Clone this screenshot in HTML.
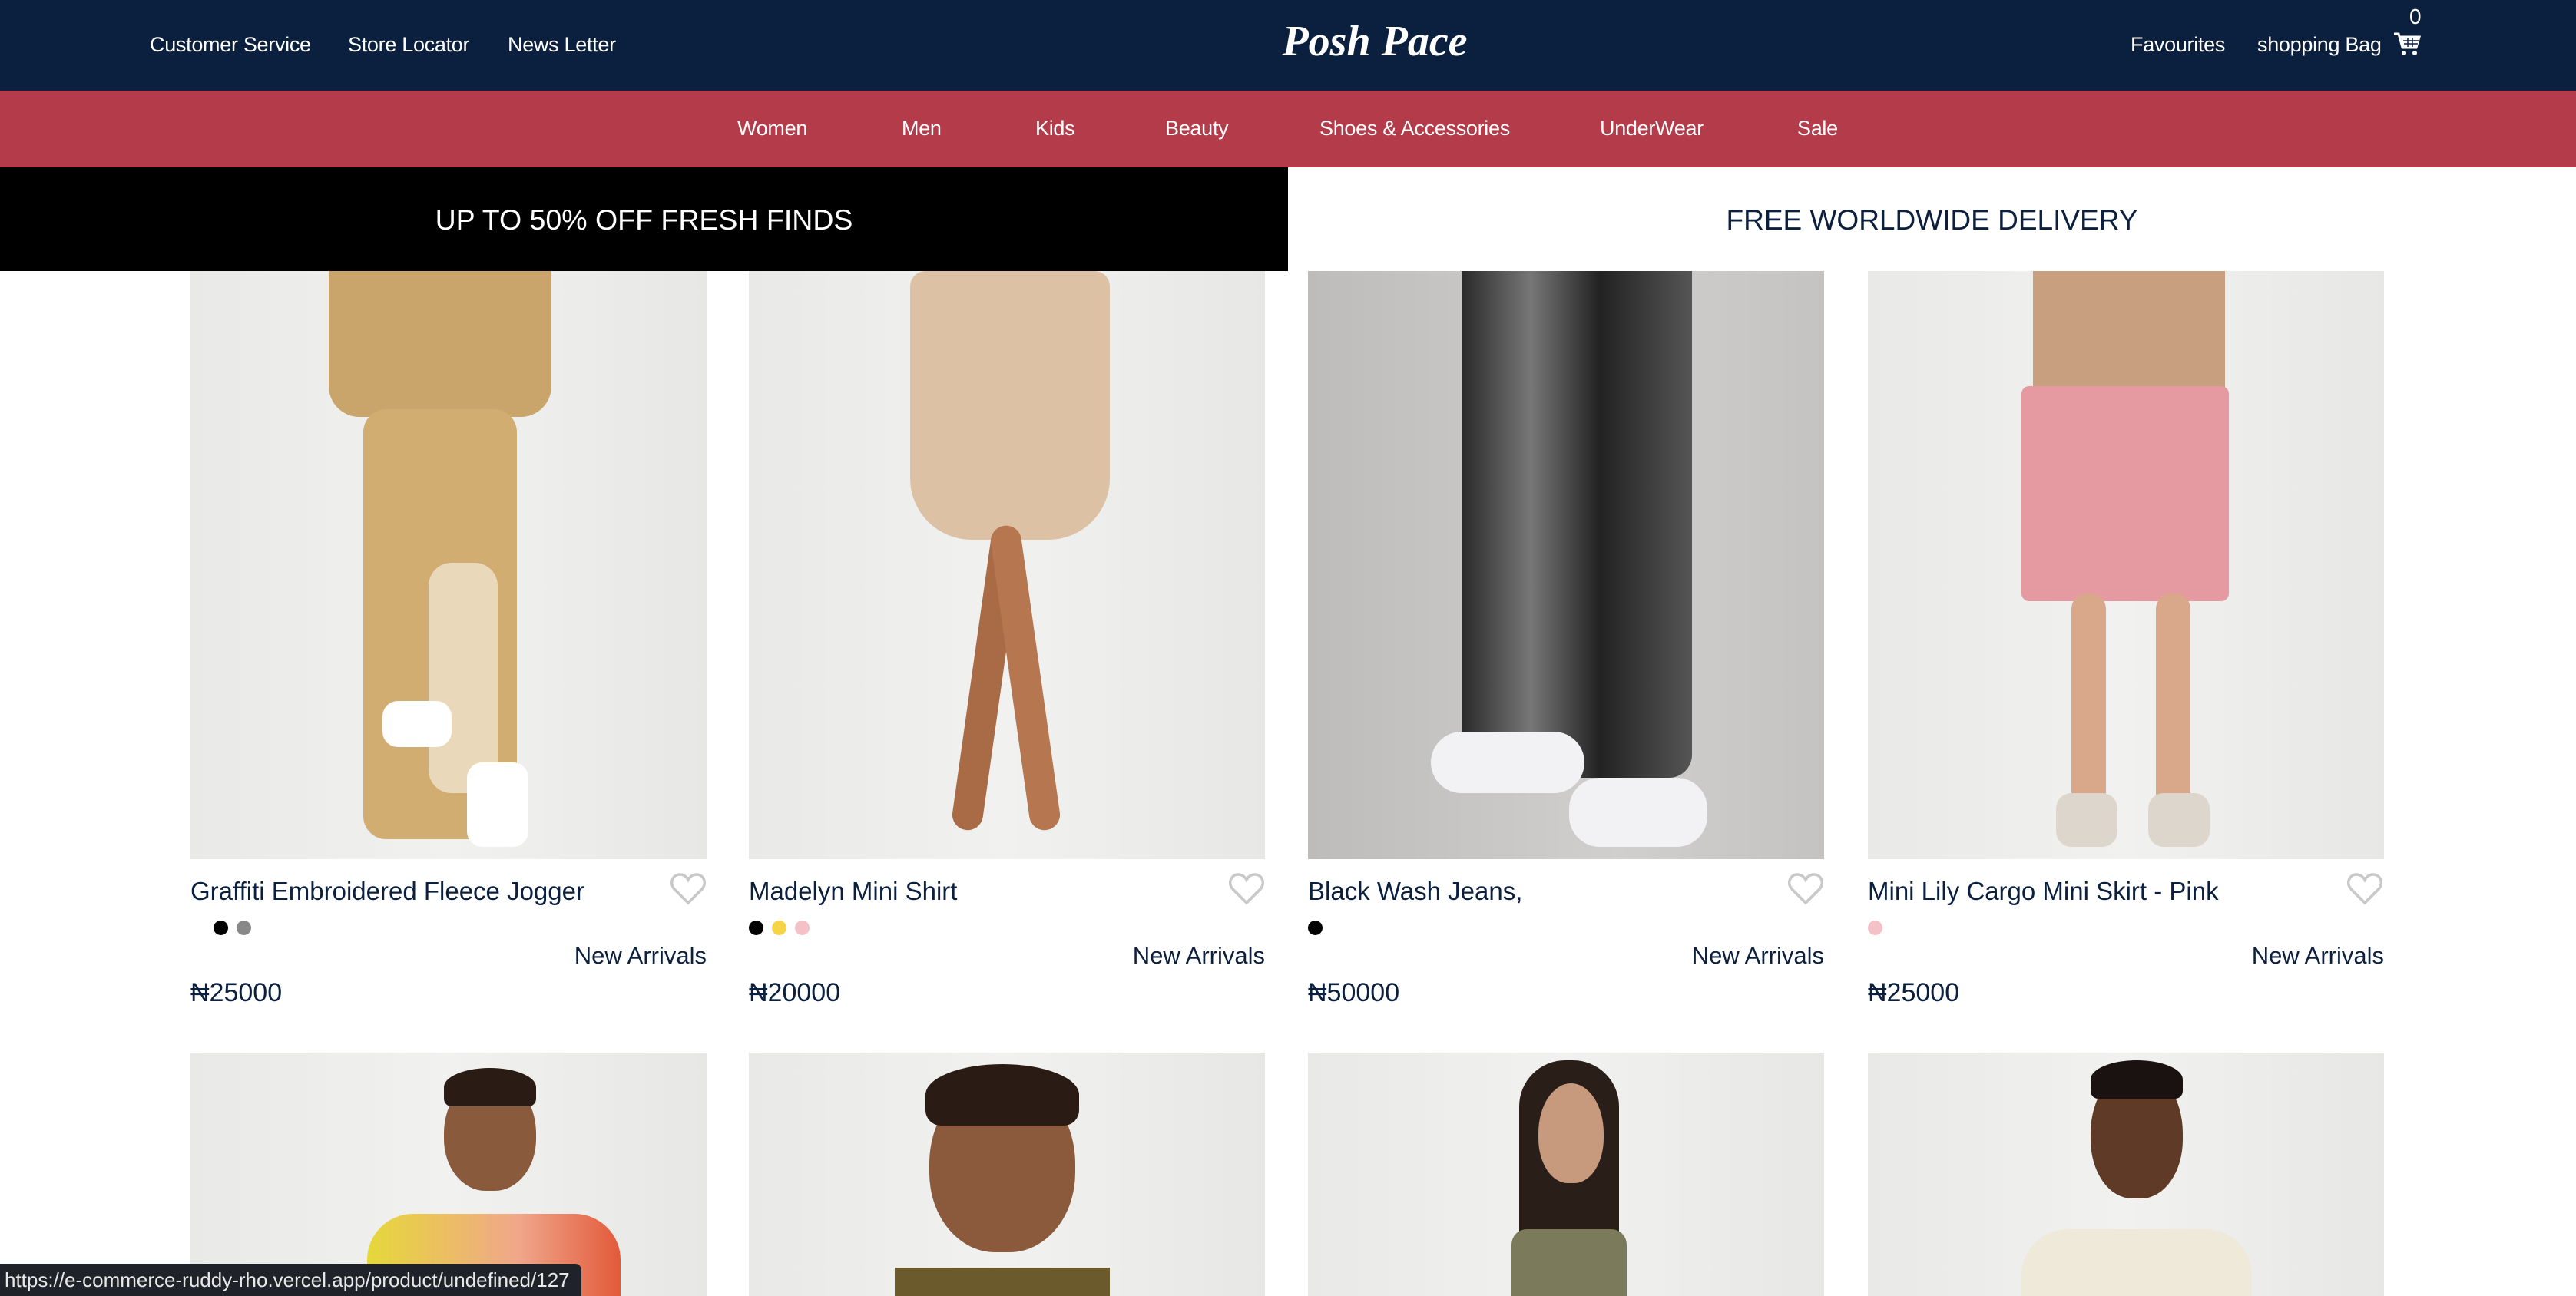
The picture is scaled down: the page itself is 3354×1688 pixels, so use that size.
<!DOCTYPE html>
<html><head><meta charset="utf-8"><style>
*{margin:0;padding:0;box-sizing:border-box}
body{width:3354px;height:1688px;overflow:hidden;background:#fff;font-family:"Liberation Sans",sans-serif;position:relative;color:#0b1f3f}
.hdr{position:absolute;left:0;top:0;width:3354px;height:118px;background:#0b1f3f;color:#fff}
.hdr span{position:absolute;top:43px;font-size:27px;letter-spacing:-0.3px}
.logo{position:absolute;left:1790px;transform:translateX(-50%);top:22px;font-family:"Liberation Serif",serif;font-style:italic;font-weight:bold;font-size:56px;color:#fff;white-space:nowrap}
.nav{position:absolute;left:0;top:118px;width:3354px;height:100px;background:#b33b4a;color:#fff}
.nav span{position:absolute;top:34px;font-size:27px;letter-spacing:-0.3px}
.ban1{position:absolute;left:0;top:218px;width:1677px;height:135px;background:#000;color:#fff;font-size:37.5px;text-align:center;line-height:137px}
.ban2{position:absolute;left:1677px;top:218px;width:1677px;height:135px;background:#fff;color:#0b1f3f;font-size:37px;text-align:center;line-height:137px}
.img{position:absolute;width:672px;overflow:hidden;background:linear-gradient(90deg,#e9e9e7,#f1f1f0 50%,#e7e7e5)}
.t{position:absolute;font-size:33px;color:#0b1f3f}
.na{position:absolute;font-size:31px;text-align:right;width:672px}
.pr{position:absolute;font-size:34px}
.dot{position:absolute;width:19px;height:19px;border-radius:50%;top:1199px}
.heart{position:absolute;top:1136px}
.sb{position:absolute;left:0;top:1646px;width:757px;height:42px;background:#1f2329;border-top-right-radius:8px;color:#e8e8e8;font-size:26px;line-height:42px;padding-left:6px}
</style></head><body>
<div class="hdr">
<span style="left:195px">Customer Service</span>
<span style="left:453px">Store Locator</span>
<span style="left:661px">News Letter</span>
<div class="logo">Posh Pace</div>
<span style="left:2774px">Favourites</span>
<span style="left:2939px">shopping Bag</span>
<span style="left:3137px;top:6px;font-size:28px">0</span>
<svg style="position:absolute;left:3116px;top:42px" width="36" height="32" viewBox="0 0 36 32"><path d="M1 2h6l5 18h18l4-14H9" fill="none" stroke="#fff" stroke-width="3"/><path d="M10 7h23l-3 12H13z" fill="#fff"/><path d="M13 11h20M14 15h18M19 7v12M25 7v12" stroke="#0b1f3f" stroke-width="1.5"/><circle cx="14" cy="27" r="3" fill="#fff"/><circle cx="28" cy="27" r="3" fill="#fff"/></svg>
</div>
<div class="nav">
<span style="left:960px">Women</span><span style="left:1174px">Men</span><span style="left:1348px">Kids</span><span style="left:1517px">Beauty</span><span style="left:1718px">Shoes &amp; Accessories</span><span style="left:2083px">UnderWear</span><span style="left:2340px">Sale</span>
</div>
<div class="ban1">UP TO 50% OFF FRESH FINDS</div>
<div class="ban2">FREE WORLDWIDE DELIVERY</div>

<div class="img" style="left:248px;top:353px;height:766px">
<div style="position:absolute;left:180px;top:0;width:290px;height:190px;background:#c9a56c;border-radius:0 0 40px 40px"></div>
<div style="position:absolute;left:225px;top:180px;width:200px;height:560px;background:#d2ad72;border-radius:30px"></div>
<div style="position:absolute;left:310px;top:380px;width:90px;height:300px;background:#f3ead8;border-radius:30px;opacity:.7"></div>
<div style="position:absolute;left:250px;top:560px;width:90px;height:60px;background:#fff;border-radius:20px"></div>
<div style="position:absolute;left:360px;top:640px;width:80px;height:110px;background:#fff;border-radius:20px"></div>
</div>
<div class="img" style="left:975px;top:353px;height:766px">
<div style="position:absolute;left:210px;top:0;width:260px;height:350px;background:#dcc1a4;border-radius:20px 20px 80px 80px"></div>
<div style="position:absolute;left:290px;top:330px;width:40px;height:400px;background:#a86b45;transform:rotate(8deg);border-radius:20px"></div>
<div style="position:absolute;left:340px;top:330px;width:40px;height:400px;background:#b57650;transform:rotate(-8deg);border-radius:20px"></div>
</div>
<div class="img" style="left:1703px;top:353px;height:766px;background:linear-gradient(90deg,#bdbcba,#d0cfcd 60%,#c4c3c1)">
<div style="position:absolute;left:200px;top:0;width:300px;height:660px;background:linear-gradient(90deg,#2a2a2a,#777,#222 60%,#555);border-radius:0 0 30px 30px"></div>
<div style="position:absolute;left:160px;top:600px;width:200px;height:80px;background:#f2f2f4;border-radius:40px"></div>
<div style="position:absolute;left:340px;top:660px;width:180px;height:90px;background:#f2f2f4;border-radius:40px"></div>
</div>
<div class="img" style="left:2432px;top:353px;height:766px">
<div style="position:absolute;left:215px;top:0;width:250px;height:160px;background:#c8a080"></div>
<div style="position:absolute;left:200px;top:150px;width:270px;height:280px;background:#e49aa0;border-radius:10px"></div>
<div style="position:absolute;left:265px;top:420px;width:45px;height:280px;background:#d9a88a;border-radius:20px"></div>
<div style="position:absolute;left:375px;top:420px;width:45px;height:280px;background:#d9a88a;border-radius:20px"></div>
<div style="position:absolute;left:245px;top:680px;width:80px;height:70px;background:#ddd6cc;border-radius:20px"></div>
<div style="position:absolute;left:365px;top:680px;width:80px;height:70px;background:#ddd6cc;border-radius:20px"></div>
</div>

<div class="t" style="left:248px;top:1142px">Graffiti Embroidered Fleece Jogger</div>
<div class="t" style="left:975px;top:1142px">Madelyn Mini Shirt</div>
<div class="t" style="left:1703px;top:1142px">Black Wash Jeans,</div>
<div class="t" style="left:2432px;top:1142px">Mini Lily Cargo Mini Skirt - Pink</div>

<svg class="heart" style="left:872px" width="48" height="44" viewBox="0 0 48 44"><path d="M24 40L6 22C-1 14 4 3 13 3c5 0 9 3 11 7 2-4 6-7 11-7 9 0 14 11 7 19z" fill="none" stroke="#c8c8c8" stroke-width="3.5"/></svg>
<svg class="heart" style="left:1599px" width="48" height="44" viewBox="0 0 48 44"><path d="M24 40L6 22C-1 14 4 3 13 3c5 0 9 3 11 7 2-4 6-7 11-7 9 0 14 11 7 19z" fill="none" stroke="#c8c8c8" stroke-width="3.5"/></svg>
<svg class="heart" style="left:2327px" width="48" height="44" viewBox="0 0 48 44"><path d="M24 40L6 22C-1 14 4 3 13 3c5 0 9 3 11 7 2-4 6-7 11-7 9 0 14 11 7 19z" fill="none" stroke="#c8c8c8" stroke-width="3.5"/></svg>
<svg class="heart" style="left:3055px" width="48" height="44" viewBox="0 0 48 44"><path d="M24 40L6 22C-1 14 4 3 13 3c5 0 9 3 11 7 2-4 6-7 11-7 9 0 14 11 7 19z" fill="none" stroke="#c8c8c8" stroke-width="3.5"/></svg>

<div class="dot" style="left:278px;background:#000"></div><div class="dot" style="left:308px;background:#888"></div>
<div class="dot" style="left:975px;background:#000"></div><div class="dot" style="left:1005px;background:#f5d547"></div><div class="dot" style="left:1035px;background:#f4c1c9"></div>
<div class="dot" style="left:1703px;background:#000"></div>
<div class="dot" style="left:2432px;background:#f4c1c9"></div>

<div class="na" style="left:248px;top:1227px">New Arrivals</div>
<div class="na" style="left:975px;top:1227px">New Arrivals</div>
<div class="na" style="left:1703px;top:1227px">New Arrivals</div>
<div class="na" style="left:2432px;top:1227px">New Arrivals</div>

<div class="pr" style="left:248px;top:1274px">₦25000</div>
<div class="pr" style="left:975px;top:1274px">₦20000</div>
<div class="pr" style="left:1703px;top:1274px">₦50000</div>
<div class="pr" style="left:2432px;top:1274px">₦25000</div>

<div class="img" style="left:248px;top:1371px;height:317px">
<div style="position:absolute;left:330px;top:30px;width:120px;height:150px;background:#8a5a3c;border-radius:50% 50% 45% 45%"></div>
<div style="position:absolute;left:330px;top:20px;width:120px;height:50px;background:#2a1c14;border-radius:50% 50% 10px 10px"></div>
<div style="position:absolute;left:230px;top:210px;width:330px;height:120px;background:linear-gradient(90deg,#e6d83a,#f0a68a 60%,#e25a3a);border-radius:60px 60px 0 0"></div>
</div>
<div class="img" style="left:975px;top:1371px;height:317px">
<div style="position:absolute;left:235px;top:30px;width:190px;height:230px;background:#8b5a3d;border-radius:50% 50% 45% 45%"></div>
<div style="position:absolute;left:230px;top:15px;width:200px;height:80px;background:#2a1c14;border-radius:50% 50% 20px 20px"></div>
<div style="position:absolute;left:190px;top:280px;width:280px;height:60px;background:#6b5a2c"></div>
</div>
<div class="img" style="left:1703px;top:1371px;height:317px">
<div style="position:absolute;left:275px;top:10px;width:130px;height:300px;background:#2a1e18;border-radius:60px 60px 10px 10px"></div>
<div style="position:absolute;left:300px;top:40px;width:85px;height:130px;background:#c79a7e;border-radius:50% 50% 45% 45%"></div>
<div style="position:absolute;left:265px;top:230px;width:150px;height:100px;background:#7b7a5a;border-radius:20px 20px 0 0"></div>
</div>
<div class="img" style="left:2432px;top:1371px;height:317px">
<div style="position:absolute;left:290px;top:20px;width:120px;height:170px;background:#5e3a27;border-radius:50% 50% 45% 45%"></div>
<div style="position:absolute;left:290px;top:10px;width:120px;height:50px;background:#1a1210;border-radius:50% 50% 10px 10px"></div>
<div style="position:absolute;left:200px;top:230px;width:300px;height:100px;background:#efe9da;border-radius:60px 60px 0 0"></div>
</div>

<div class="sb">https://e-commerce-ruddy-rho.vercel.app/product/undefined/127</div>
</body></html>
